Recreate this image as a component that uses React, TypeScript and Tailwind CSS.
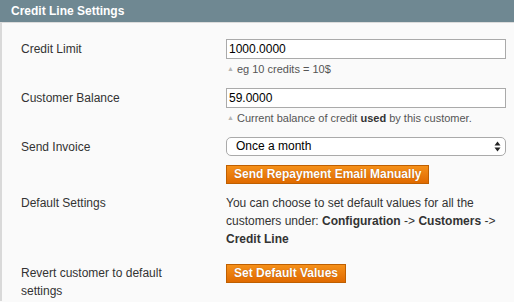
const font = { fontFamily: '"Liberation Sans", Arial, sans-serif' };

function Hint({ children }: { children: React.ReactNode }) {
  return (
    <div className="mt-[3px] flex items-center gap-[3px] pl-[1px] text-[11px] leading-[14px] text-[#555]">
      <span className="text-[7px] text-[#b5b5b5]">▲</span>
      <span>{children}</span>
    </div>
  );
}

function OrangeButton({ label }: { label: string }) {
  return (
    <button
      type="button"
      className="block h-[19px] border border-[#bf5f00] bg-gradient-to-b from-[#f59019] to-[#e06a00] px-[7px] text-[12px] font-bold leading-[17px] text-white [text-shadow:0_0_1px_rgba(120,50,0,0.6)]"
    >
      {label}
    </button>
  );
}

function Row({ label, children, className = "" }: { label: React.ReactNode; children: React.ReactNode; className?: string }) {
  return (
    <div className={`flex ${className}`}>
      <div className="w-[205px] shrink-0 pr-[40px] text-[12px] leading-[18px] text-[#333]">{label}</div>
      <div className="w-[280px]">{children}</div>
    </div>
  );
}

export default function App() {
  return (
    <div className="h-[302px] w-[514px] bg-[#fafafa]" style={font}>
      <div className="flex h-[23px] items-center border-b border-[#dcdcdc] bg-[#6f8892] px-[11px] text-[12px] font-bold text-white">
        Credit Line Settings
      </div>
      <div className="h-[278px] border-l-2 border-[#d9d9d9] pl-[19px] pt-[16px]">
        <Row label={<div className="pt-[1px]">Credit Limit</div>}>
          <div className="h-[20px] border border-[#aaa] bg-white px-[2px] text-[12px] leading-[18px] text-black">1000.0000</div>
          <Hint>eg 10 credits = 10$</Hint>
        </Row>
        <Row label={<div className="pt-[1px]">Customer Balance</div>} className="mt-[12px]">
          <div className="h-[20px] border border-[#aaa] bg-white px-[2px] text-[12px] leading-[18px] text-black">59.0000</div>
          <Hint>
            Current balance of credit <b className="text-[#333]">used</b> by this customer.
          </Hint>
        </Row>
        <Row label={<div className="pt-[1px]">Send Invoice</div>} className="mt-[12px]">
          <div className="relative h-[19px] rounded-[5px] border border-[#aaa] bg-white pl-[9px] text-[12px] leading-[17px] text-black">
            Once a month
            <svg className="absolute right-[4px] top-[3px]" width="7" height="11" viewBox="0 0 7 11">
              <path d="M3.5 0.5 L6.5 4.5 H0.5 Z" fill="#222" />
              <path d="M3.5 10.5 L6.5 6.5 H0.5 Z" fill="#222" />
            </svg>
          </div>
          <div className="mt-[9px] flex">
            <OrangeButton label="Send Repayment Email Manually" />
          </div>
        </Row>
        <Row label="Default Settings" className="mt-[10px]">
          <div className="text-[12px] leading-[18px] text-[#333]">
            You can choose to set default values for all the customers under: <b>Configuration</b> -&gt;{" "}
            <b>Customers</b> -&gt; <b>Credit Line</b>
          </div>
        </Row>
        <Row label="Revert customer to default settings" className="mt-[16px]">
          <OrangeButton label="Set Default Values" />
        </Row>
      </div>
    </div>
  );
}
